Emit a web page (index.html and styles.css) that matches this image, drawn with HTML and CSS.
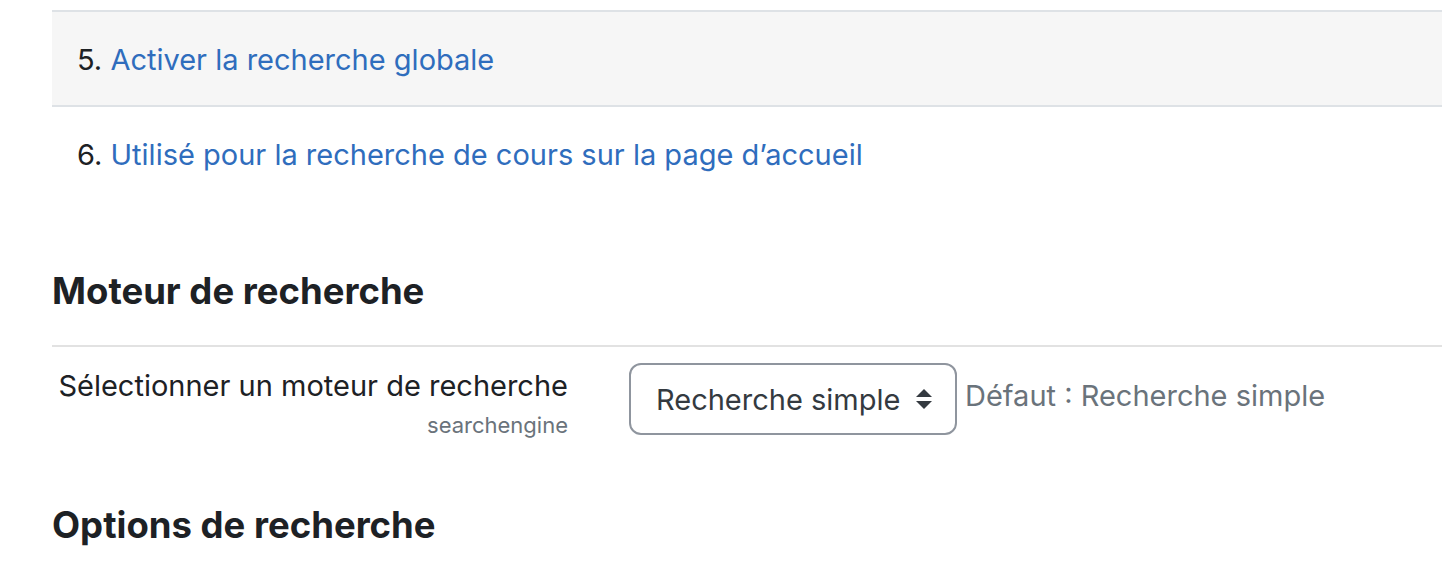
FILE: index.html
```html
<!DOCTYPE html>
<html lang="fr">
<head>
<meta charset="utf-8">
<link rel="stylesheet" href="styles.css">
</head>
<body>
<div class="page">
  <ol class="results" start="5">
    <li class="result shaded"><span class="num">5.</span> <a href="#">Activer la recherche globale</a></li>
    <li class="result"><span class="num">6.</span> <a href="#">Utilisé pour la recherche de cours sur la page d’accueil</a></li>
  </ol>

  <h3 class="section-title first">Moteur de recherche</h3>
  <div class="setting">
    <div class="setting-label">
      <label>Sélectionner un moteur de recherche</label>
      <span class="setting-name">searchengine</span>
    </div>
    <div class="setting-control">
      <div class="select">
        <span>Recherche simple</span>
        <svg class="caret" width="16" height="22" viewBox="0 0 16 22"><path d="M8 1 L16 9 H0 Z M0 13 H16 L8 21 Z" fill="#343a40"/></svg>
      </div>
      <span class="default">Défaut : Recherche simple</span>
    </div>
  </div>

  <h3 class="section-title">Options de recherche</h3>
</div>
</body>
</html>
```
FILE: styles.css
```css
html, body {
  margin: 0;
  padding: 0;
  background: #fff;
}
body {
  font-family: "Inter", "Liberation Sans", Arial, sans-serif;
  color: #1d2125;
}
.page {
  padding: 10px 0 0 52px;
}
.results {
  list-style: none;
  margin: 0;
  padding: 0;
}
.result {
  height: 95px;
  line-height: 95px;
  padding-left: 25px;
  font-size: 29px;
  box-sizing: border-box;
}
.result.shaded {
  background: #f6f6f6;
  border-top: 2px solid #dee2e6;
  border-bottom: 2px solid #dee2e6;
  height: 97px;
  padding-top: 2px;
  line-height: 91px;
}
.num {
  color: #1d2125;
}
.result a {
  color: #2f6dbd;
  text-decoration: none;
}
.section-title {
  font-size: 36.5px;
  font-weight: bold;
  margin: 0;
  color: #1d2125;
}
.section-title.first {
  margin-top: 67px;
  padding-bottom: 32px;
  border-bottom: 2px solid #e2e2e2;
}
.setting {
  display: flex;
  padding-top: 16px;
  height: 156px;
  box-sizing: border-box;
}
.setting-label {
  width: 516px;
  display: flex;
  flex-direction: column;
  align-items: flex-end;
}
.setting-label label {
  font-size: 29px;
  line-height: 36px;
  margin-top: 5px;
  color: #1d2125;
}
.setting-name {
  font-size: 22px;
  color: #6a737b;
  margin-top: 8px;
}
.setting-control {
  margin-left: 61px;
  display: flex;
  align-items: flex-start;
}
.select {
  width: 328px;
  height: 72px;
  box-sizing: border-box;
  border: 2px solid #8f959e;
  border-radius: 12px;
  display: flex;
  align-items: center;
  padding-left: 25px;
  font-size: 29px;
  color: #343a40;
}
.caret {
  margin-left: auto;
  margin-right: 23px;
}
.default {
  font-size: 29px;
  color: #6a737b;
  margin-left: 8px;
  margin-top: 15px;
}
```
